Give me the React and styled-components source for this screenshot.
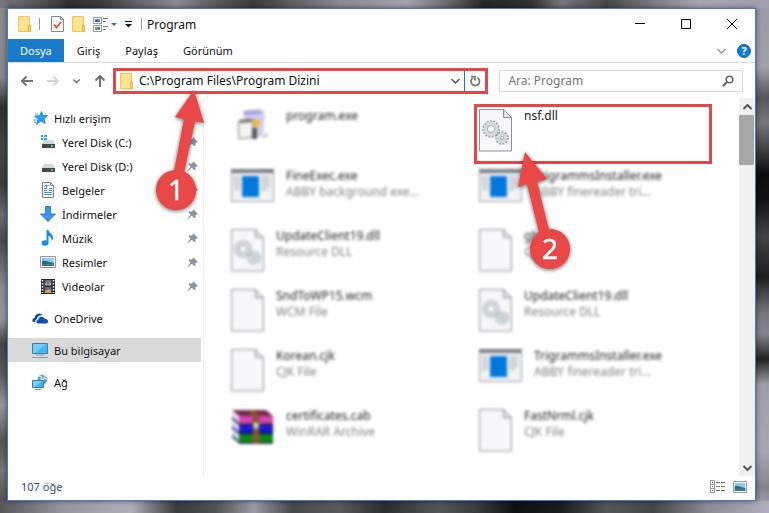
import React, { useState } from 'react'
import styled, { createGlobalStyle, css } from 'styled-components'

const GlobalStyle = createGlobalStyle`
  * {
    box-sizing: border-box;
  }
  body {
    margin: 0;
    font-family: 'Noto Sans', 'Open Sans', sans-serif;
    font-size: 12px;
    color: #111;
  }
  button, input {
    font: inherit;
    color: inherit;
    background: none;
    border: 0;
    padding: 0;
    margin: 0;
    outline: 0;
  }
  svg {
    display: block;
    flex: none;
  }
`

const Desktop = styled.div`
  display: flex;
  min-height: 100vh;
  padding: 8px 13px 12px 7px;
  background:
    linear-gradient(90deg, #77757e, #55555a 5%, #2f3032 9%, #3a3a3c 13%, #77757f 20%, #8b8992 23%, #5c5b60 28%, #3c3c3e 33%, #8a8891 44%, #a5a3ae 53%, #6d6c72 58%, #252628 63%, #303133 69%, #77757d 73%, #46474a 79%, #74737b 84%, #aaa8b3 91%, #a09eaa) top / 100% 8px no-repeat,
    linear-gradient(90deg, #55565a, #96949d 8%, #b0aeb8 17%, #3a3b3d 23%, #515255 28%, #9c9aa4 33%, #47484a 38%, #5b5b5e 44%, #2c2d2f 50%, #55565a 57%, #3b3c3e 62%, #0f1012 67%, #1c1d1f 73%, #55565a 79%, #44464a 85%, #8d8b95 92%, #b0aeba) bottom / 100% 12px no-repeat,
    linear-gradient(#8b8a92, #87868e 15%, #2f3031 21%, #454647 28%, #3b3c3d 36%, #6b6b70 42%, #4a4b4c 47%, #8b8a92 56%, #96959c 62%, #444546 67%, #59595c 73%, #98979f 79%, #555656 86%, #77767b 92%, #444) left / 7px 100% no-repeat,
    linear-gradient(#9a98a4, #a3a1ac 13%, #55565b 19%, #77767e 24%, #0b0c0e 34%, #111214 39%, #424446 46%, #1c1e20 54%, #77767f 61%, #85838e 65%, #222325 70%, #a09eaa 75%, #a8a6b2 88%, #85838e 95%, #aaa8b4) right / 13px 100% no-repeat,
    #555;
`

const Explorer = styled.main`
  position: relative;
  flex: 1;
  display: flex;
  flex-direction: column;
  min-width: 0;
  background: #fff;
  border: 1px solid #3f7fc9;
  box-shadow: 0 0 5px rgba(0, 0, 0, 0.5);
`

const TitleBar = styled.header`
  display: flex;
  align-items: center;
  height: 30px;
  padding-left: 10px;
`

const QuickTools = styled.div`
  display: flex;
  align-items: center;
  gap: 8px;
`

const Separator = styled.span`
  width: 1px;
  height: 12px;
  margin-right: 3px;
  background: #999;
`

const Title = styled.h1`
  flex: 1;
  margin: 0 0 0 2px;
  font-size: 12px;
  font-weight: 400;
`

const WindowButton = styled.button`
  display: grid;
  place-items: center;
  width: 46px;
  height: 30px;
`

const Ribbon = styled.nav`
  display: flex;
  align-items: center;
  gap: 1px;
  height: 24px;
  border-bottom: 1px solid #dadbdc;
`

const Tab = styled.button`
  height: 23px;
  padding: 0 12px;
  font-size: 11px;
  ${props => props.$active && css`
    color: #fff;
    background: #1979ca;
  `}
`

const RibbonEnd = styled.div`
  display: flex;
  align-items: center;
  gap: 11px;
  margin-left: auto;
  padding-right: 4px;
`

const NavBar = styled.div`
  display: flex;
  align-items: center;
  height: 35px;
  padding: 0 12px 0 13px;
`

const NavButtons = styled.div`
  display: flex;
  align-items: center;
  gap: 14px;
  margin-right: 7px;
`

const IconButton = styled.button`
  display: grid;
  place-items: center;
`

const AddressBar = styled.form`
  flex: 366 1 0;
  display: flex;
  align-items: center;
  height: 26px;
  padding-left: 4px;
  border: 3px solid #e84545;
`

const AddressInput = styled.input`
  flex: 1;
  min-width: 0;
  height: 20px;
  margin-left: 6px;
`

const Refresh = styled.button`
  display: grid;
  place-items: center;
  width: 21px;
  height: 20px;
  margin-left: 4px;
  border-left: 1px solid #1979ca;
`

const SearchBox = styled.form`
  flex: 226 1 0;
  display: flex;
  align-items: center;
  height: 22px;
  margin-left: 11px;
  padding: 0 8px;
  border: 1px solid #d9d9d9;
`

const SearchInput = styled.input`
  flex: 1;
  min-width: 0;
  &::placeholder {
    color: #767676;
    opacity: 1;
  }
`

const Body = styled.div`
  flex: 1;
  display: flex;
  min-height: 0;
`

const Sidebar = styled.nav`
  width: 196px;
  padding: 8px 2px 0 0;
  border-right: 1px solid #f0f0f0;
  font-size: 11px;
`

const Place = styled.a`
  display: flex;
  align-items: center;
  gap: 6px;
  height: 24px;
  margin-top: ${props => props.$spaced ? 8 : 0}px;
  padding: 0 3px 0 ${props => props.$nested ? 32 : 24}px;
  color: #111;
  text-decoration: none;
  background: ${props => props.$selected ? '#d9d9d9' : 'none'};
`

const PlaceName = styled.span`
  flex: 1;
`

const Files = styled.ul`
  flex: 1;
  display: grid;
  grid-template-columns: 1fr 1fr;
  grid-auto-rows: 60px;
  margin: 0;
  padding: 9px 12px 0 27px;
  list-style: none;
`

const File = styled.li`
  position: relative;
  padding-top: 2px;
`

const FileContent = styled.div`
  display: flex;
  align-items: flex-start;
  gap: 12px;
  filter: ${props => props.$sharp ? 'none' : 'blur(1.4px)'};
`

const Highlight = styled.span`
  position: absolute;
  inset: -3px 15px 3px -5px;
  border: 3px solid #e84545;
`

const FileText = styled.div`
  margin-top: -1px;
  line-height: 16px;
  color: #222;
  small {
    display: block;
    font-size: 12px;
    color: #808080;
  }
`

const ScrollBar = styled.div`
  display: flex;
  flex-direction: column;
  width: 16px;
  background: #f0f0f0;
`

const ScrollButton = styled.button`
  display: grid;
  place-items: center;
  height: 17px;
`

const Thumb = styled.div`
  width: 15px;
  height: 50px;
  margin-bottom: auto;
  background: #a6a6a6;
`

const StatusBar = styled.footer`
  display: flex;
  align-items: center;
  gap: 7px;
  height: 24px;
  padding: 0 8px 3px 13px;
  font-size: 11px;
  color: #3c4f73;
`

const Count = styled.span`
  flex: 1;
`

const Pointer = styled.svg`
  position: absolute;
  left: ${props => props.$x}px;
  top: ${props => props.$y}px;
  filter: drop-shadow(0 1px 2px rgba(0, 0, 0, 0.6));
  pointer-events: none;
`

const FolderIcon = () => (
  <svg width="13" height="16" viewBox="0 0 13 16">
    <path d="M.5.5h11v9h1v6H.5z" fill="#ffe48f" stroke="#edc558" />
    <path d="M10.500 9.500h2v6h-2z" fill="#f7d673" stroke="#e0b548" />
  </svg>
)

const PageCheckIcon = () => (
  <svg width="13" height="16" viewBox="0 0 13 16">
    <path d="M.5.5h9l3 3v12H.5z" fill="#f8fafb" stroke="#7f8b95" />
    <path d="M9.500.5v3h3" fill="none" stroke="#7f8b95" />
    <path d="M3 8.500l2.500 3L10 6" fill="none" stroke="#f05423" strokeWidth="1.800" />
  </svg>
)

const ViewIcon = () => (
  <svg width="24" height="15" viewBox="0 0 24 15">
    <path d="M.5.5h8v6h-8zM.5 8.500h8v6h-8z" fill="#fff" stroke="#9a9a9a" />
    <path d="M2 2h5v3H2z" fill="#4a9be8" />
    <path d="M2 4l2-1 3 2H2z" fill="#355f86" />
    <path d="M2 10h5v3H2z" fill="#7cab56" />
    <path d="M4 10h3v2H4z" fill="#317ecb" />
    <path d="M10 1.500h5M10 4.500h3M10 9.500h5M10 12.500h3" stroke="#777" />
    <path d="M18 6h6l-3 3z" fill="#3d73b8" />
  </svg>
)

const CustomizeIcon = () => (
  <svg width="8" height="8" viewBox="0 0 8 8">
    <path d="M0 1.500h7" stroke="#111" />
    <path d="M0 4h7L3.500 7.500z" fill="#111" />
  </svg>
)

const Glyph = ({ size = 12, d, color = '#707070', width = 2 }) => (
  <svg width={size} height={size} viewBox="0 0 12 12">
    <path d={d} fill="none" stroke={color} strokeWidth={width} />
  </svg>
)

const Chevron = ({ up, width = 9, color = '#555', stroke = 1.5 }) => (
  <svg width={width} height="6" viewBox="0 0 9 6">
    <path d={up ? 'M.5 5l4-4 4 4' : 'M.5 1l4 4 4-4'} fill="none" stroke={color} strokeWidth={stroke} />
  </svg>
)

const HelpIcon = () => (
  <svg width="14" height="14" viewBox="0 0 14 14">
    <circle cx="7" cy="7" r="6.500" fill="#0f7ad8" stroke="#1264b0" />
    <text x="7" y="11" textAnchor="middle" fontSize="11" fontWeight="700" fill="#fff">?</text>
  </svg>
)

const RefreshIcon = () => (
  <svg width="11" height="12" viewBox="0 0 11 12">
    <path d="M7.500 2.800A4.200 4.200 0 1 1 3 2.800" fill="none" stroke="#777" strokeWidth="1.700" />
    <path d="M1 1.500h4v4" fill="none" stroke="#777" strokeWidth="1.700" />
  </svg>
)

const SearchIcon = () => (
  <svg width="12" height="12" viewBox="0 0 12 12">
    <circle cx="7.500" cy="4.500" r="3.300" fill="none" stroke="#666" strokeWidth="1.600" />
    <path d="M5 7L.8 11.200" stroke="#666" strokeWidth="2" />
  </svg>
)

const PinIcon = () => (
  <svg width="11" height="12" viewBox="0 0 11 12">
    <path d="M6 1l5 5-1.500.5-1.200 1 .2 2.500-1.500 0-2.200-2.300L.5 11.500l-.3-.3 3.300-4.500L1.500 4.500 2 3.300l2.800.2L6 2.300z" fill="#8796a1" />
  </svg>
)

const StarIcon = () => (
  <svg width="16" height="14" viewBox="0 0 16 14">
    <path d="M9.500.5l1.600 4H15.500l-3.400 3.200 1.200 5L9 10l-4.500 3.300L6 8.300 3 5l4.500-.3z" fill="#2ba1f0" stroke="#1581d0" strokeWidth=".8" />
    <path d="M3 3h3M2 6h2M1 9h4M2 11.500h2" stroke="#3da9f0" />
  </svg>
)

const DriveIcon = ({ system }) => (
  <svg width="16" height="14" viewBox="0 0 16 14">
    {system && <path d="M1 0h2v2H1zM4 0h3v2H4zM1 3h2v2H1zM4 3h3v3H4z" fill="#1eaaf1" />}
    <path d="M4 5h9l2 4H2z" fill="#d4d6d8" />
    <path d="M2 9h13v4H2z" fill="#45494c" />
    <path d="M11 10h2v2h-2z" fill="#38e13f" />
  </svg>
)

const DocumentIcon = () => (
  <svg width="16" height="16" viewBox="0 0 16 16">
    <path d="M2.500.5h8l3 3v12h-11z" fill="#fff" stroke="#7b8891" />
    <path d="M10.500.5v3h3" fill="none" stroke="#7b8891" />
    <path d="M7 3.500h2M4 6.500h3M9 6.500h3M4 8.500h3M9 8.500h3M4 10.500h8M4 12.500h8" stroke="#4197d6" />
    <path d="M4.500 5l1-2h1v3" fill="none" stroke="#4197d6" />
  </svg>
)

const DownloadIcon = () => (
  <svg width="16" height="16" viewBox="0 0 16 16">
    <path d="M5.500.5h5v7.500h5L8 15.500.5 8h5z" fill="#3b97ee" stroke="#2a7dd0" />
  </svg>
)

const MusicIcon = () => (
  <svg width="16" height="16" viewBox="0 0 16 16">
    <ellipse cx="5" cy="13" rx="3.500" ry="2.700" fill="#1292ec" />
    <path d="M6.500 0h2c.2 3 4.500 4 4.500 7.500 0 1.500-.7 2.500-1.500 3.500.3-3-1-4.500-3-5v7h-2z" fill="#1292ec" />
  </svg>
)

const PictureIcon = ({ width = 16, height = 12 }) => (
  <svg width={width} height={height} viewBox="0 0 16 12" preserveAspectRatio="none">
    <path d="M.5.5h15v11H.5z" fill="#fff" stroke="#8c979e" />
    <path d="M2 2h12v5H2z" fill="#8ec9f2" />
    <path d="M2 5c3-1 6 1 12 2v3H2z" fill="#2d6d72" />
    <path d="M2 8.500l12-1V10H2z" fill="#3e79b0" />
  </svg>
)

const VideoIcon = () => (
  <svg width="16" height="16" viewBox="0 0 16 16">
    <path d="M1 1h14v15H1z" fill="#2b2b2b" />
    <path d="M2.500 2v13M13.500 2v13" stroke="#fff" strokeWidth="1.500" strokeDasharray="1.500 1.500" />
    <path d="M4.500 2h7v6h-7zM4.500 9h7v6h-7z" fill="#3a6cc0" />
    <path d="M5 6l3-3 3 2v2H5zM5 13l4-2 2 2v2H5z" fill="#e0a424" />
    <path d="M7 4h2v2H7zM6 10h2v2H6z" fill="#c44b2a" />
  </svg>
)

const CloudIcon = () => (
  <svg width="16" height="11" viewBox="0 0 16 11">
    <path d="M1 9C-.5 7 1 5 2.500 5 3 1.500 6 0 8 .5c1 .2 2 1 2.500 1.800C7 2 5 4 5 6 3.500 6.500 3 8 3.500 9z" fill="#0d4fb1" />
    <path d="M6 10.500C4 10 4 7 6.300 6.700 6.500 3.500 11 2.300 12.500 5.700 15 5.500 16 7 16 8.500s-1 2-2 2z" fill="#0d4fb1" />
  </svg>
)

const ComputerIcon = () => (
  <svg width="16" height="15" viewBox="0 0 16 15">
    <path d="M.5.5h15v10H.5z" fill="#43b8f8" stroke="#43809f" />
    <path d="M1 1h13L3 10H1z" fill="#74cdfb" />
    <path d="M4 12h8M0 14.500h16" stroke="#88a1b1" />
  </svg>
)

const NetworkIcon = () => (
  <svg width="16" height="16" viewBox="0 0 16 16">
    <circle cx="10.500" cy="5.500" r="5" fill="#6d9fb8" />
    <path d="M7 2c2 0 3 1 2 3l2 1 1-2 3 1M11 0c0 2 3 1 3 3" stroke="#c1e3ed" fill="none" strokeWidth="1.500" />
    <path d="M.5 6.500h11v7H.5z" fill="#42b6f5" stroke="#397ea5" />
    <path d="M1 7h9l-7 6H1z" fill="#77cefa" />
    <path d="M3 15.500h6" stroke="#829aa8" />
  </svg>
)

const Gear = ({ cx, cy, r }) => (
  <g transform={`translate(${cx} ${cy})`} fill="none">
    <circle r={r} stroke="#8d9ba5" strokeWidth="2.500" strokeDasharray="1.800 1.300" />
    <circle r={r - 2} stroke="#d2dade" strokeWidth="4" />
    <circle r={r - 4 > 1.5 ? r - 4 : 1.5} stroke="#8d9ba5" strokeWidth=".8" fill="#fff" />
  </g>
)

const PageIcon = ({ gears }) => (
  <svg width="33" height="43" viewBox="0 0 33 43">
    <path d="M.5.500h24l8 8v33.500H.5z" fill="#f5f7f8" stroke="#8b9297" />
    <path d="M24.500.5v8h8z" fill="#e2e6e8" stroke="#8b9297" />
    {gears && <Gear cx={12} cy={20} r={7.5} />}
    {gears && <Gear cx={23} cy={29} r={5.5} />}
  </svg>
)

const AppIcon = () => (
  <svg width="43" height="33" viewBox="0 0 43 33">
    <path d="M.5.5h42v32H.5z" fill="#f2f3f4" stroke="#949a9e" />
    <path d="M0 0h43v4H0z" fill="#777d82" />
    <path d="M3 8h6M3 11h6M3 14h6M3 17h6M3 20h6M30 8h9M30 11h9M30 14h9M30 17h9M30 20h6" stroke="#b4b8bb" strokeWidth="1.500" />
    <path d="M11 7h17v21H11z" fill="#0078dc" />
  </svg>
)

const SetupIcon = () => (
  <svg width="43" height="33" viewBox="0 0 43 33">
    <path d="M12 2l18-2 4 3-2 24-16 2z" fill="#cfcdf0" />
    <path d="M13 2l17-1v4l-17 1z" fill="#a3a0dd" />
    <path d="M7 14l14-2 2 16-15 2z" fill="#f1f4f1" stroke="#777" />
    <path d="M8 11l12-1 3 3H8z" fill="#5d6b60" />
    <circle cx="25" cy="14" r="4" fill="#f2b748" />
    <path d="M21 19h5v11h-5z" fill="#55555c" />
    <path d="M30 28l8-4-3 4z" fill="#aaa" />
  </svg>
)

const ArchiveIcon = () => (
  <svg width="43" height="35" viewBox="0 0 43 35">
    <path d="M1 1h34l7 6H8z" fill="#76294c" />
    <path d="M1 1l7 6v28l-7-6z" fill="#d9dceb" />
    <path d="M1 9l7 6M1 18l7 6M1 27l7 6" stroke="#444569" strokeWidth="2" />
    <path d="M8 7h34v8H8z" fill="#d247b0" />
    <path d="M8 16h34v8H8z" fill="#1919dd" />
    <path d="M8 25h34v9H8z" fill="#0b8b15" />
    <path d="M8 15.500h34M8 24.500h34M8 34h34" stroke="#171732" strokeWidth="1.500" />
    <path d="M17 1h6l5 6v27h-6V7z" fill="#8b552a" />
    <path d="M22 13h6v7h-6z" fill="#ddd3b0" stroke="#555" />
  </svg>
)

const DetailsIcon = () => (
  <svg width="16" height="13" viewBox="0 0 16 13">
    <path d="M.5.5h4v12h-4zM.5 4.500h4M.5 8.500h4" fill="#fff" stroke="#999" />
    <path d="M6 2.500h4M11 2.500h4M6 6.500h4M11 6.500h4M6 10.500h4M11 10.500h4" stroke="#777" />
    <path d="M2 2h1v1H2zM2 6h1v1H2z" fill="#357ec7" />
    <path d="M2 10h1v1H2z" fill="#e02424" />
  </svg>
)

const icons = {
  page: <PageIcon />,
  gears: <PageIcon gears />,
  app: <AppIcon />,
  setup: <SetupIcon />,
  archive: <ArchiveIcon />
}

const places = [
  { name: 'Hızlı erişim', icon: <StarIcon /> },
  { name: 'Yerel Disk (C:)', icon: <DriveIcon system />, nested: true },
  { name: 'Yerel Disk (D:)', icon: <DriveIcon />, nested: true },
  { name: 'Belgeler', icon: <DocumentIcon />, nested: true },
  { name: 'İndirmeler', icon: <DownloadIcon />, nested: true },
  { name: 'Müzik', icon: <MusicIcon />, nested: true },
  { name: 'Resimler', icon: <PictureIcon />, nested: true },
  { name: 'Videolar', icon: <VideoIcon />, nested: true },
  { name: 'OneDrive', icon: <CloudIcon />, spaced: true },
  { name: 'Bu bilgisayar', icon: <ComputerIcon />, spaced: true, selected: true },
  { name: 'Ağ', icon: <NetworkIcon />, spaced: true }
]

const files = [
  { name: 'program.exe', icon: 'setup' },
  { name: 'nsf.dll', icon: 'gears', marked: true },
  { name: 'FineExec.exe', type: 'ABBY background exe...', icon: 'app' },
  { name: 'TrigrammsInstaller.exe', type: 'ABBY finereader tri...', icon: 'app' },
  { name: 'UpdateClient19.dll', type: 'Resource DLL', icon: 'gears' },
  { name: 'gb.cjk', type: 'CJK File', icon: 'page' },
  { name: 'SndToWP15.wcm', type: 'WCM File', icon: 'page' },
  { name: 'UpdateClient19.dll', type: 'Resource DLL', icon: 'gears' },
  { name: 'Korean.cjk', type: 'CJK File', icon: 'page' },
  { name: 'TrigrammsInstaller.exe', type: 'ABBY finereader tri...', icon: 'app' },
  { name: 'certificates.cab', type: 'WinRAR Archive', icon: 'archive' },
  { name: 'FastNrml.cjk', type: 'CJK File', icon: 'page' }
]

const App = () => {
  const [path, setPath] = useState('C:\\Program Files\\Program Dizini')
  const [query, setQuery] = useState('')
  const [tab, setTab] = useState('Dosya')

  const onSubmitHandler = event => event.preventDefault()

  return (
    <>
      <GlobalStyle />
      <Desktop>
        <Explorer>
          <TitleBar>
            <QuickTools>
              <FolderIcon />
              <Separator />
              <IconButton aria-label="Özellikler"><PageCheckIcon /></IconButton>
              <IconButton aria-label="Yeni klasör"><FolderIcon /></IconButton>
              <IconButton aria-label="Görünüm"><ViewIcon /></IconButton>
              <IconButton aria-label="Özelleştir"><CustomizeIcon /></IconButton>
              <Separator />
            </QuickTools>
            <Title>Program</Title>
            <WindowButton aria-label="Simge durumuna küçült"><Glyph d="M1 5.500h10" color="#000" width={1} /></WindowButton>
            <WindowButton aria-label="Ekranı kapla"><Glyph d="M1.500 1.500h9v9h-9z" color="#000" width={1} /></WindowButton>
            <WindowButton aria-label="Kapat"><Glyph d="M1 1l10 10M11 1L1 11" color="#000" width={1} /></WindowButton>
          </TitleBar>
          <Ribbon>
            {['Dosya', 'Giriş', 'Paylaş', 'Görünüm'].map(name => (
              <Tab key={name} $active={tab === name} onClick={() => setTab(name)}>{name}</Tab>
            ))}
            <RibbonEnd>
              <IconButton aria-label="Şeridi genişlet"><Chevron color="#999" /></IconButton>
              <IconButton aria-label="Yardım"><HelpIcon /></IconButton>
            </RibbonEnd>
          </Ribbon>
          <NavBar>
            <NavButtons>
              <IconButton aria-label="Geri"><Glyph d="M12 6H1M5.500 1.500L1 6l4.500 4.500" /></IconButton>
              <IconButton aria-label="İleri"><Glyph d="M0 6h11M6.500 1.500L11 6l-4.500 4.500" color="#d5d5d5" /></IconButton>
              <IconButton aria-label="Son konumlar"><Chevron width={7} color="#777" stroke={2} /></IconButton>
              <IconButton aria-label="Yukarı"><Glyph d="M6 12V1M1.500 5.500L6 1l4.500 4.500" /></IconButton>
            </NavButtons>
            <AddressBar onSubmit={onSubmitHandler}>
              <FolderIcon />
              <AddressInput aria-label="Adres" value={path} onChange={event => setPath(event.target.value)} />
              <IconButton type="button" aria-label="Önceki konumlar"><Chevron /></IconButton>
              <Refresh aria-label="Yenile"><RefreshIcon /></Refresh>
            </AddressBar>
            <SearchBox onSubmit={onSubmitHandler}>
              <SearchInput aria-label="Ara" placeholder="Ara: Program" value={query} onChange={event => setQuery(event.target.value)} />
              <IconButton aria-label="Aramayı başlat"><SearchIcon /></IconButton>
            </SearchBox>
          </NavBar>
          <Body>
            <Sidebar>
              {places.map(place => (
                <Place key={place.name} href="#" $nested={place.nested} $spaced={place.spaced} $selected={place.selected}>
                  {place.icon}
                  <PlaceName>{place.name}</PlaceName>
                  {place.nested && <PinIcon />}
                </Place>
              ))}
            </Sidebar>
            <Files>
              {files.map((file, index) => (
                <File key={index}>
                  <FileContent $sharp={file.marked}>
                    {icons[file.icon]}
                    <FileText>
                      {file.name}
                      {file.type && <small>{file.type}</small>}
                    </FileText>
                  </FileContent>
                  {file.marked && <Highlight />}
                </File>
              ))}
            </Files>
            <ScrollBar>
              <ScrollButton aria-label="Yukarı kaydır"><Chevron up stroke={2} /></ScrollButton>
              <Thumb />
              <ScrollButton aria-label="Aşağı kaydır"><Chevron stroke={2} /></ScrollButton>
            </ScrollBar>
          </Body>
          <StatusBar>
            <Count>107 öğe</Count>
            <IconButton aria-label="Ayrıntılar"><DetailsIcon /></IconButton>
            <IconButton aria-label="Büyük simgeler"><PictureIcon width={14} height={12} /></IconButton>
          </StatusBar>
          <Pointer $x={146} $y={79} width="52" height="124" viewBox="154 88 52 124">
            <path d="M194 90l10 33-9-2-11 52-10-2 10-52-9-2z" fill="#ea4747" />
            <circle cx="176" cy="190" r="20" fill="#ea4747" />
            <text x="176" y="200" textAnchor="middle" fontSize="28" fill="#fff" stroke="#fff" strokeWidth=".5">1</text>
          </Pointer>
          <Pointer $x={508} $y={141} width="66" height="122" viewBox="516 150 66 122">
            <path d="M525 152l22 27-10 3 12 48-10 2-12-48-9 3z" fill="#ea4747" />
            <circle cx="550" cy="249" r="20" fill="#ea4747" />
            <text x="550" y="259" textAnchor="middle" fontSize="28" fill="#fff" stroke="#fff" strokeWidth=".5">2</text>
          </Pointer>
        </Explorer>
      </Desktop>
    </>
  )
}

export default App
